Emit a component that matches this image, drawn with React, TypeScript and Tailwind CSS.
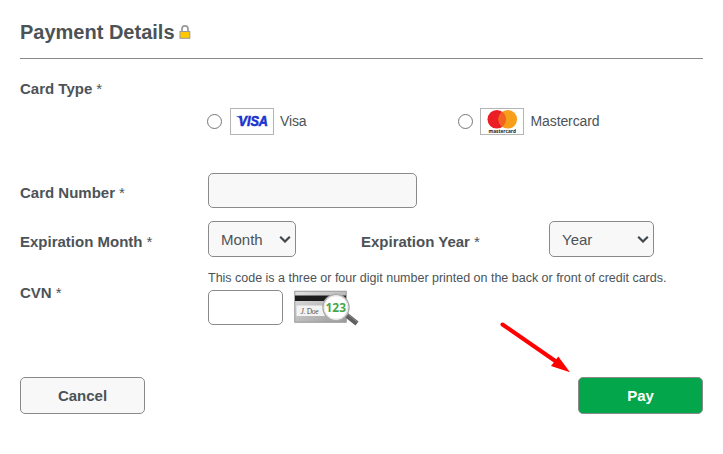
import React from "react";

function Label({ text, className = "" }: { text: string; className?: string }) {
  return (
    <div className={`text-[15px] leading-5 whitespace-nowrap ${className}`}>
      <span className="font-bold">{text}</span>
      <span className="ml-1">*</span>
    </div>
  );
}

function Lock() {
  return (
    <svg width="12" height="16" viewBox="0 0 12 16">
      <path d="M3 8V5a3 3.2 0 0 1 6 0v3" fill="none" stroke="#999" strokeWidth="1.7" />
      <rect x="1" y="7.500" width="9.800" height="6.800" fill="#ffc800" stroke="#999" strokeWidth="1" />
    </svg>
  );
}

function Radio({ name }: { name: string }) {
  return (
    <input
      type="radio"
      name="card"
      aria-label={name}
      className="size-[15px] appearance-none rounded-full border border-[#767676] bg-white"
    />
  );
}

function VisaLogo() {
  return (
    <svg className="ml-2" width="44" height="27" viewBox="0 0 44 27">
      <rect x=".5" y=".5" width="43" height="26" fill="#fff" stroke="#b4b4b4" />
      <text x="8.500" y="18.400" textLength="29.500" lengthAdjust="spacingAndGlyphs" fill="#1a34d0" stroke="#1a34d0" strokeWidth=".6" fontFamily="Liberation Sans, sans-serif" fontSize="14" fontStyle="italic" fontWeight="700">VISA</text>
      <path d="M6.500 8.300h4.800l1.200 4.200C10.800 10.400 8.800 9.300 6.500 8.700Z" fill="#1a34d0" />
    </svg>
  );
}

function MastercardLogo() {
  return (
    <svg className="ml-2" width="44" height="27" viewBox="0 0 44 27">
      <rect x=".5" y=".5" width="43" height="26" fill="#fff" stroke="#b4b4b4" />
      <circle cx="16.800" cy="11.300" r="9.300" fill="#eb1d25" />
      <circle cx="27.800" cy="11.300" r="9.300" fill="#f79e1b" />
      <path d="M22.300 3.800a9.300 9.300 0 0 1 0 15a9.300 9.300 0 0 1 0-15Z" fill="#f26322" />
      <text x="8.500" y="25" textLength="27.500" lengthAdjust="spacingAndGlyphs" fill="#222" fontFamily="Open Sans, sans-serif" fontSize="5" fontWeight="700">mastercard</text>
    </svg>
  );
}

function CvnImage() {
  return (
    <svg width="67" height="37" viewBox="0 0 67 37">
      <defs>
        <linearGradient id="card" x1="0" y1="0" x2="1" y2="1">
          <stop offset="0" stopColor="#e2e2e2" />
          <stop offset="1" stopColor="#999" />
        </linearGradient>
      </defs>
      <rect x=".75" y="1.250" width="51.500" height="31" fill="url(#card)" stroke="#999" strokeWidth="1" />
      <rect x="1" y="5.500" width="51" height="5.500" fill="#1c1c1c" />
      <rect x="2.500" y="15.500" width="32" height="10.500" fill="#f3f3f3" />
      <text x="6.500" y="23.500" textLength="18" fill="#555" fontFamily="Liberation Serif, serif" fontSize="7.500"><tspan fontStyle="italic">J.</tspan> Doe</text>
      <path d="M51 24L63 33.500" stroke="#606060" strokeWidth="5" />
      <path d="M53.500 24L64 32.500" stroke="#888" strokeWidth="1" />
      <circle cx="42" cy="17.500" r="13" fill="#fff" stroke="#aaa" strokeWidth="1.500" />
      <circle cx="42" cy="17.500" r="11.800" fill="none" stroke="#e5e5e5" />
      <text x="31.500" y="22" textLength="20.500" lengthAdjust="spacingAndGlyphs" fill="#46a847" fontFamily="Open Sans, sans-serif" fontSize="12" fontWeight="700">123</text>
    </svg>
  );
}

function Select({ text, className }: { text: string; className: string }) {
  return (
    <button className={`flex h-9 items-center justify-between rounded-[5px] border border-[#8a8a8a] bg-[#f8f8f8] pr-1 pl-3 text-[15px] ${className}`}>
      <span className="pt-0.5">{text}</span>
      <svg width="12" height="8" viewBox="0 0 12 8">
        <path d="M1.200 1.700L6 6.500L10.800 1.700" fill="none" stroke="#41484d" strokeWidth="2.200" />
      </svg>
    </button>
  );
}

export default function App() {
  return (
    <main className="relative h-[454px] w-[723px] bg-white px-5 pt-[18px] font-['Liberation_Sans',Arial,sans-serif] text-[#4c5357]">
      <header className="flex h-[41px] items-start border-b border-[#8a8a8a]">
        <h1 className="text-[20px] leading-7 font-bold">Payment Details</h1>
        <span className="mt-1.5 ml-1"><Lock /></span>
      </header>

      <section className="pt-5">
        <Label text="Card Type" />
        <div className="mt-[9px] flex h-[27px] items-center pl-[187px] text-[14px]">
          <label className="flex w-[251px] items-center">
            <Radio name="Visa" /><VisaLogo /><span className="ml-1.5 tracking-[-0.15px]">Visa</span>
          </label>
          <label className="flex items-center">
            <Radio name="Mastercard" /><span className="-ml-px"><MastercardLogo /></span><span className="ml-[6.5px] tracking-[-0.1px]">Mastercard</span>
          </label>
        </div>
      </section>

      <section className="mt-[38px] flex h-[35px] items-center">
        <Label text="Card Number" className="w-[188px] pt-1" />
        <input aria-label="Card Number" className="h-[35px] w-[209px] rounded-[5px] border border-[#8a8a8a] bg-[#f8f8f8]" />
      </section>

      <section className="mt-[13px] flex h-9 items-center">
        <Label text="Expiration Month" className="w-[188px] pt-[5px]" />
        <Select text="Month" className="w-[88px]" />
        <Label text="Expiration Year" className="ml-[65px] w-[188px] pt-[5px]" />
        <Select text="Year" className="w-[105px]" />
      </section>

      <section className="mt-3 flex h-[60px]">
        <Label text="CVN" className="w-[188px] pt-[14px]" />
        <div>
          <p className="pt-px text-[12.500px] leading-4 tracking-[-0.01px] whitespace-nowrap">This code is a three or four digit number printed on the back or front of credit cards.</p>
          <div className="mt-1 flex">
            <input aria-label="CVN" className="h-[35px] w-[75px] rounded-[5px] border border-[#8a8a8a] bg-white" />
            <span className="ml-[11px]"><CvnImage /></span>
          </div>
        </div>
      </section>

      <footer className="mt-12 flex justify-between text-[15px] font-bold">
        <button className="h-[37px] w-[125px] rounded-[5px] border border-[#8a8a8a] bg-[#f8f8f8] pt-0.5">Cancel</button>
        <button className="h-[37px] w-[125px] rounded-[5px] border border-[#8a8a8a] bg-[#04a64b] pt-0.5 text-white">Pay</button>
      </footer>

      <svg className="absolute top-[320px] left-[498px]" width="74" height="56" viewBox="0 0 74 56">
        <path d="M4.500 4.500L58 41.500" stroke="#f00" strokeWidth="4" strokeLinecap="round" />
        <path d="M72 52.300L60.300 36.500L53 46Z" fill="#f00" />
      </svg>
    </main>
  );
}
